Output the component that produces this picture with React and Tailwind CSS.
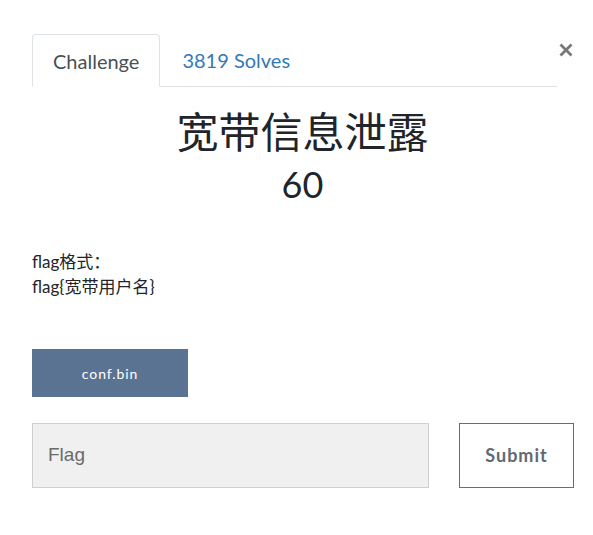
export default function App() {
  return (
    <div className="w-[593px] h-[535px] bg-white font-['Lato','Noto_Sans_CJK_SC',sans-serif] text-[#212529]">
      <div className="pl-8 pt-[34px] flex items-start">
        {/* Tabs */}
        <div className="w-[525px] flex border-b border-[#dee2e6] h-[53px]">
          <div className="h-[53px] -mb-px px-[20px] flex items-center border border-[#dee2e6] border-b-white bg-white rounded-t-[4px] text-[20px] text-[#495057]">
            Challenge
          </div>
          <div className="h-[52px] px-[22px] flex items-center text-[20px] text-[#337ab7]">
            3819 Solves
          </div>
        </div>
        {/* Close */}
        <button className="ml-[1px] mt-[8px] w-[16px] h-[16px] flex items-center justify-center text-[#777]">
          <svg width="14" height="14" viewBox="0 0 14 14">
            <path d="M1.5 1.5 L12.5 12.5 M12.5 1.5 L1.5 12.5" stroke="#777" strokeWidth="2.8" strokeLinecap="butt" />
          </svg>
        </button>
      </div>

      <div className="w-[541px] ml-8 flex flex-col items-center">
        <h1 className="mt-[17px] text-[42px] leading-[52px] text-[#212529] font-['Noto_Sans_CJK_SC',sans-serif] font-normal">
          宽带信息泄露
        </h1>
        <div className="mt-[6px] text-[36px] leading-[44px] font-normal text-[#212529]">60</div>
      </div>

      <div className="ml-8 mt-[43px] text-[17px] leading-[25px] text-[#212529]">
        <p>flag格式：</p>
        <p>flag{'{'}宽带用户名{'}'}</p>
      </div>

      <div className="ml-8 mt-[50px]">
        <button className="w-[156px] h-[48px] bg-[#5b7392] text-white text-[14px] font-normal tracking-[0.9px] flex items-center justify-center">
          conf.bin
        </button>
      </div>

      <div className="ml-8 mt-[26px] flex gap-[30px]">
        <div className="w-[397px] h-[65px] bg-[#f0f0f0] border border-[#cfcfcf] flex items-center pl-[15px] font-['Liberation_Sans',sans-serif] text-[19px] text-[#6b6b6b]">
          Flag
        </div>
        <button className="w-[115px] h-[65px] border border-[#6c6c6c] bg-white text-[18px] font-bold text-[#5f6a73] tracking-[1px] flex items-center justify-center">
          Submit
        </button>
      </div>
    </div>
  )
}
